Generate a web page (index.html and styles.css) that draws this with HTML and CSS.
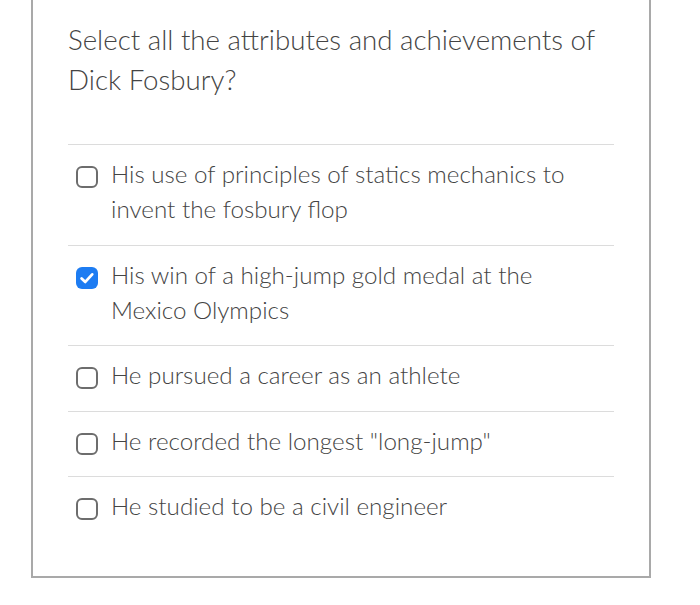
FILE: index.html
```html
<!DOCTYPE html>
<html>
<head>
<meta charset="utf-8">
<link rel="stylesheet" href="styles.css">
</head>
<body>
<div class="card">
  <div class="question">Select all the attributes and achievements of Dick Fosbury?</div>
  <ul class="options">
    <li class="option">
      <span class="box"></span>
      <span class="label">His use of principles of statics mechanics to invent the fosbury flop</span>
    </li>
    <li class="option">
      <span class="box checked"><svg viewBox="0 0 22 22" width="22" height="22"><path d="M5.6 11.4 L9.3 14.9 L16.2 7.4" fill="none" stroke="#fff" stroke-width="2.8" stroke-linecap="round" stroke-linejoin="round"/></svg></span>
      <span class="label">His win of a high-jump gold medal at the Mexico Olympics</span>
    </li>
    <li class="option">
      <span class="box"></span>
      <span class="label">He pursued a career as an athlete</span>
    </li>
    <li class="option">
      <span class="box"></span>
      <span class="label">He recorded the longest "long-jump"</span>
    </li>
    <li class="option">
      <span class="box"></span>
      <span class="label">He studied to be a civil engineer</span>
    </li>
  </ul>
</div>
</body>
</html>
```
FILE: styles.css
```css
html, body {
  margin: 0;
  padding: 0;
  background: #ffffff;
}
body {
  font-family: Lato, "Open Sans", "Liberation Sans", sans-serif;
  font-weight: 300;
  color: #444444;
}
.card {
  box-sizing: border-box;
  margin-left: 31px;
  width: 620px;
  border: 2px solid #a9a9a9;
  border-top: none;
  padding: 20px 35px 34px 35px;
}
.question {
  font-size: 27.7px;
  line-height: 40px;
  color: #444444;
  padding-bottom: 44px;
  border-bottom: 1px solid #dcdcdc;
}
.options {
  list-style: none;
  margin: 0;
  padding: 0;
}
.option {
  display: flex;
  align-items: flex-start;
  gap: 13px;
  padding: 11px 20px 18.5px 8px;
  border-bottom: 1px solid #dcdcdc;
  font-size: 24.2px;
  line-height: 35px;
}
.option:last-child {
  border-bottom: none;
}
.box {
  box-sizing: border-box;
  flex: none;
  width: 22px;
  height: 22px;
  margin-top: 10px;
  border: 2px solid #6d6d6d;
  border-radius: 6px;
  display: flex;
  align-items: center;
  justify-content: center;
}
.box.checked {
  border: none;
  background: #1d7cf2;
}
.box.checked svg {
  display: block;
}
.label {
  color: #444444;
}
```
